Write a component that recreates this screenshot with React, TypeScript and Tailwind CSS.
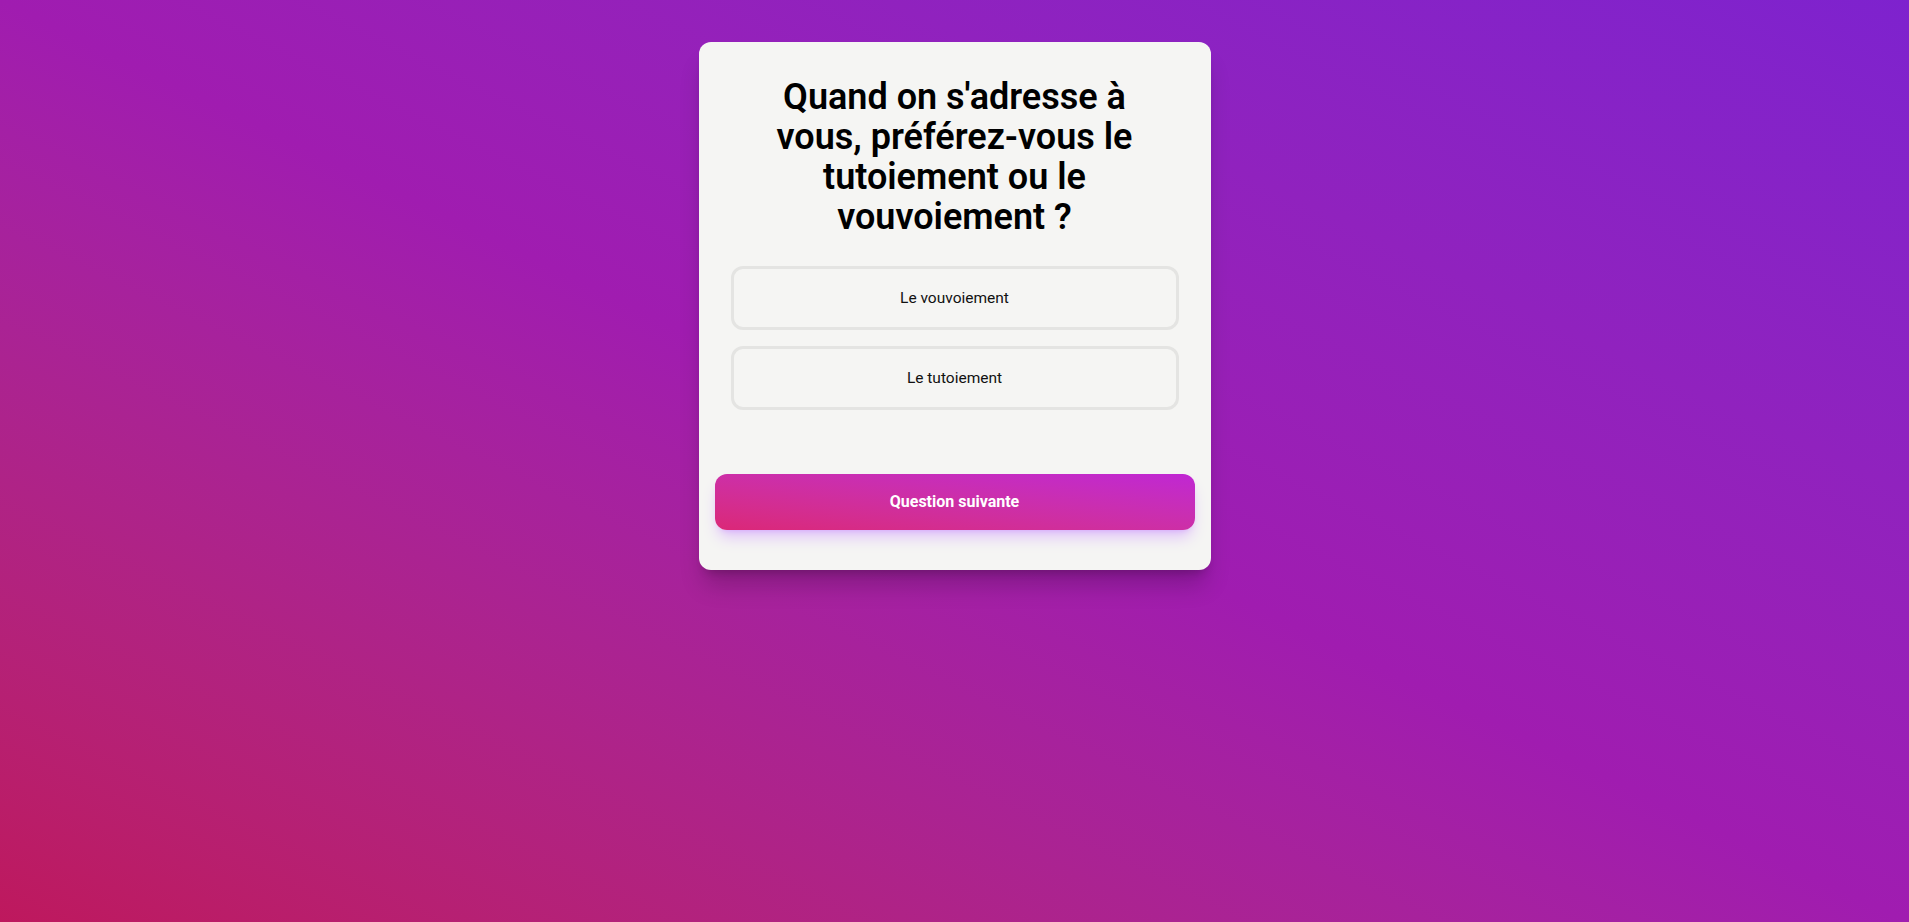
import React from "react";

export default function App() {
  return (
    <div
      className="min-h-screen w-full bg-linear-to-tr from-[#be185d] via-[#a01cb0] to-[#7e22ce] flex justify-center items-start pt-[42px]"
      style={{ fontFamily: "Roboto, 'Liberation Sans', sans-serif" }}
    >
      <div className="w-[512px] rounded-xl bg-[#f5f5f3] shadow-xl shadow-black/20 flex flex-col">
        <div className="px-8 pt-[35px]">
          <h1 className="px-8 text-center text-[36px] leading-[40px] font-semibold text-black">
            Quand on s'adresse à vous, préférez-vous le tutoiement ou le vouvoiement ?
          </h1>
          <div className="mt-[29px] flex flex-col gap-4">
            <button className="w-full rounded-xl border-[3px] border-[#e4e4e2] bg-[#f5f5f3] py-[17px] text-[15.5px] leading-6 text-[#111]">
              Le vouvoiement
            </button>
            <button className="w-full rounded-xl border-[3px] border-[#e4e4e2] bg-[#f5f5f3] py-[17px] text-[15.5px] leading-6 text-[#111]">
              Le tutoiement
            </button>
          </div>
        </div>
        <div className="px-4 pt-16 pb-10">
          <button className="w-full rounded-xl bg-linear-to-tr from-[#db2777] to-[#c026d3] py-4 text-[16px] leading-6 font-bold text-white shadow-lg shadow-purple-500/30">
            Question suivante
          </button>
        </div>
      </div>
    </div>
  );
}
